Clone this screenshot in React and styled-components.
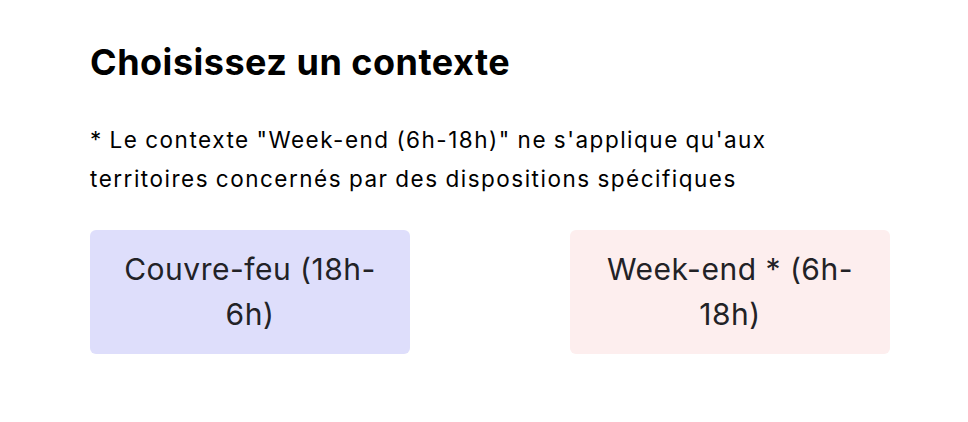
import React from "react";
import styled, { createGlobalStyle } from "styled-components";

const Global = createGlobalStyle`
  html, body { margin: 0; padding: 0; background: #ffffff; }
  body { font-family: Inter, "Noto Sans", sans-serif; color: #000; }
  * { box-sizing: border-box; }
`;

const Page = styled.main`
  padding: 40px 90px 0 90px;
  width: 968px;
`;

const Title = styled.h1`
  margin: 0;
  font-size: 36px;
  line-height: 44px;
  font-weight: 700;
  letter-spacing: 0.5px;
  color: #000;
`;

const Note = styled.p`
  margin: 36px 0 0 0;
  font-size: 22.5px;
  line-height: 39px;
  letter-spacing: 1.5px;
  word-spacing: -1px;
  color: #000;
  max-width: 800px;
`;

const Choices = styled.div`
  margin-top: 32px;
  display: grid;
  grid-template-columns: 320px 320px;
  justify-content: space-between;
  width: 800px;
`;

const Choice = styled.button`
  border: none;
  border-radius: 6px;
  background: ${(p) => p.$bg};
  color: #222226;
  font-family: Inter, "Noto Sans", sans-serif;
  font-size: 30px;
  line-height: 45px;
  letter-spacing: 0.5px;
  padding: 17px 24px;
  text-align: center;
  cursor: pointer;
`;

export default function App() {
  return (
    <>
      <Global />
      <Page>
        <Title>Choisissez un contexte</Title>
        <Note>
          * Le contexte "Week-end (6h-18h)" ne s'applique qu'aux territoires
          concernés par des dispositions spécifiques
        </Note>
        <Choices>
          <Choice $bg="#dedefb">Couvre-feu (18h-6h)</Choice>
          <Choice $bg="#fdeeee">Week-end * (6h-18h)</Choice>
        </Choices>
      </Page>
    </>
  );
}
